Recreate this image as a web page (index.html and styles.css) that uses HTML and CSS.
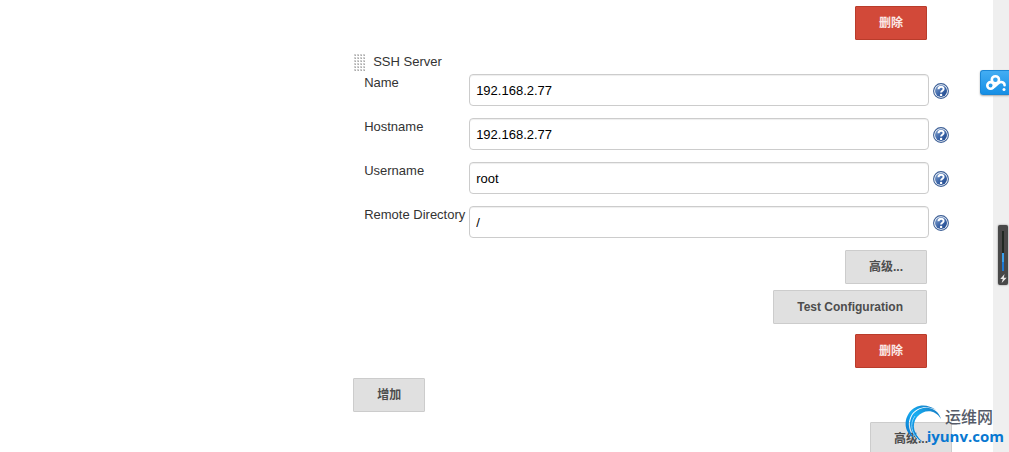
FILE: index.html
```
<!DOCTYPE html>
<html lang="zh-CN">
<head>
    <meta charset="UTF-8">
    <meta name="viewport" content="width=device-width, initial-scale=1.0">
    <title>SSH Server</title>
    <link rel="stylesheet" href="styles.css">
</head>
<body>
    <svg class="defs" width="0" height="0" aria-hidden="true">
        <defs>
            <linearGradient id="helpFill" x1="0" y1="0" x2="1" y2="1">
                <stop offset="0" stop-color="#8aa8d2"/>
                <stop offset="0.5" stop-color="#3f68aa"/>
                <stop offset="1" stop-color="#1c458a"/>
            </linearGradient>
            <symbol id="help" viewBox="0 0 16 16">
                <circle cx="8" cy="8" r="7.4" fill="#fff" stroke="#3c5f96" stroke-width="1.1"/>
                <circle cx="8" cy="8" r="6" fill="url(#helpFill)"/>
                <path d="M5.5 6.2C5.6 3 10.6 3 10.6 6C10.6 7.8 8.1 7.8 8.1 9.6" fill="none" stroke="#fff" stroke-width="2"/>
                <circle cx="8.1" cy="11.9" r="1.2" fill="#fff"/>
            </symbol>
        </defs>
    </svg>

    <main class="config">
        <div class="actions">
            <button type="button" class="btn btn-danger">删除</button>
        </div>

        <form class="server">
            <div class="server-title">
                <svg class="grip" width="11" height="17" aria-hidden="true">
                    <defs>
                        <pattern id="dots" width="3" height="3" patternUnits="userSpaceOnUse">
                            <rect width="2" height="2" fill="#d0d0d0"/>
                            <rect x="1" y="1" width="1" height="1" fill="#aaa"/>
                        </pattern>
                    </defs>
                    <rect width="11" height="17" fill="url(#dots)"/>
                </svg>
                <span>SSH Server</span>
            </div>
            <div class="field">
                <label for="name">Name</label>
                <input type="text" id="name" value="192.168.2.77">
                <a href="#" class="help" aria-label="Name"><svg width="16" height="16"><use href="#help"/></svg></a>
            </div>
            <div class="field">
                <label for="hostname">Hostname</label>
                <input type="text" id="hostname" value="192.168.2.77">
                <a href="#" class="help" aria-label="Hostname"><svg width="16" height="16"><use href="#help"/></svg></a>
            </div>
            <div class="field">
                <label for="username">Username</label>
                <input type="text" id="username" value="root">
                <a href="#" class="help" aria-label="Username"><svg width="16" height="16"><use href="#help"/></svg></a>
            </div>
            <div class="field">
                <label for="directory">Remote Directory</label>
                <input type="text" id="directory" value="/">
                <a href="#" class="help" aria-label="Remote Directory"><svg width="16" height="16"><use href="#help"/></svg></a>
            </div>
            <div class="actions actions-stack">
                <button type="button" class="btn">高级...</button>
                <button type="button" class="btn">Test Configuration</button>
            </div>
            <div class="actions">
                <button type="button" class="btn btn-danger">删除</button>
            </div>
        </form>

        <div class="add">
            <button type="button" class="btn">增加</button>
        </div>
        <div class="actions actions-outer">
            <button type="button" class="btn">高级...</button>
        </div>
    </main>
    <div class="gutter"></div>

    <!-- cloud drive tab -->
    <button type="button" class="cloud" aria-label="Cloud">
        <svg width="22" height="18" viewBox="0 0 22 18">
            <g fill="none" stroke="#fff" stroke-width="2.6" stroke-linecap="round">
                <circle cx="4.6" cy="11.4" r="3.3"/>
                <circle cx="9.4" cy="5.8" r="3.6"/>
                <path d="M7.4 13.2C9.6 12.4 11.4 9 13.8 8.2C16.6 7.4 18.6 9 18.6 11.2"/>
            </g>
            <circle cx="18" cy="15.4" r="1.5" fill="#fff"/>
        </svg>
    </button>

    <!-- battery / speed meter -->
    <div class="meter">
        <div class="meter-track"><div class="meter-fill"></div></div>
        <svg width="7" height="9" viewBox="0 0 7 9"><path d="M4.5 0L0.3 5H2.8L1.7 9L6.7 3.7H3.8Z" fill="#e8e8e8"/></svg>
    </div>

    <div class="watermark">
        <svg class="swirl" width="38" height="40" viewBox="0 0 38 40">
            <defs>
                <linearGradient id="swirlFill" x1="0" y1="1" x2="1" y2="0">
                    <stop offset="0" stop-color="#0a6fc8"/>
                    <stop offset="0.5" stop-color="#17aef2"/>
                    <stop offset="1" stop-color="#1674bd"/>
                </linearGradient>
            </defs>
            <path d="M31 6C22-1 10 0 4 9C-2 18 0 29 9 34C3 26 2 18 7 10C12 3 22 1 31 6Z" fill="url(#swirlFill)"/>
            <path d="M36 15C33 3 18 0 9 9C2 17 4 32 18 38C9 31 6 21 12 13C19 5 30 5 36 15Z" fill="url(#swirlFill)"/>
            <path d="M10 12C4 20 7 30 13 35" fill="none" stroke="#7fd6ff" stroke-width="1"/>
        </svg>
        <span class="mark-name">运维网</span>
        <span class="mark-site">iyunv.com</span>
    </div>
</body>
</html>
```
FILE: styles.css
```
* {
    box-sizing: border-box;
}
body {
    display: flex;
    height: 100vh;
    margin: 0;
    overflow: hidden;
    background-color: #fff;
    color: #333;
    font-family: "Liberation Sans", "Noto Sans CJK SC", sans-serif;
    font-size: 13px;
    line-height: 18px;
}
.defs {
    position: absolute;
}
.config {
    flex: 1;
    padding: 6px 41px 0 35%;
}
.gutter {
    width: 16px;
    background-color: #efefef;
}
.actions {
    display: flex;
    justify-content: flex-end;
    padding-right: 25px;
}
.actions-stack {
    flex-direction: column;
    align-items: flex-end;
    gap: 6px;
    margin-bottom: 10px;
}
.actions-outer {
    padding-right: 0;
}
.btn {
    height: 34px;
    padding: 0 23px;
    border: 1px solid #ccc;
    border-radius: 1px;
    background-color: #e0e0e0;
    color: #4d4d4d;
    font-family: inherit;
    font-size: 12px;
    font-weight: bold;
    line-height: 18px;
}
.btn-danger {
    border-color: #b93c2b;
    background-color: #d24939;
    color: #fbe9e7;
}

/* server block */
.server {
    margin-top: 12px;
}
.server-title {
    display: flex;
    align-items: center;
    gap: 8px;
    height: 20px;
    margin-bottom: 2px;
    padding-left: 1px;
}
.field {
    display: flex;
    margin-bottom: 12px;
    padding: 0 3px 0 11px;
}
.field label {
    width: 105px;
    white-space: nowrap;
}
.field input {
    flex: 1;
    min-width: 0;
    height: 32px;
    padding: 0 6px;
    border: 1px solid #ccc;
    border-radius: 4px;
    box-shadow: inset 0 1px 1px #eee;
    background-color: #fff;
    color: #000;
    font-family: inherit;
    font-size: 13px;
}
.help {
    height: 16px;
    margin: 9px 0 0 4px;
}
.help svg {
    display: block;
}
.add {
    margin: 10px 0;
}
.add .btn {
    display: block;
}

/* floating widgets */
.cloud {
    position: absolute;
    top: 70px;
    right: 0;
    display: flex;
    align-items: center;
    width: 29px;
    height: 25px;
    padding: 0 0 0 5px;
    border: 1px solid #1b87d6;
    border-right: 0;
    border-radius: 3px 0 0 3px;
    background: linear-gradient(#43adf3, #168fe5);
    box-shadow: 0 1px 2px #aaa;
}
.cloud svg {
    flex: none;
}
.meter {
    position: absolute;
    top: 225px;
    right: 1px;
    display: flex;
    flex-direction: column;
    align-items: center;
    gap: 3px;
    width: 10px;
    height: 60px;
    padding-top: 6px;
    border-radius: 2px;
    background-color: #484848;
    box-shadow: 0 0 2px #777;
}
.meter-track {
    display: flex;
    align-items: flex-end;
    width: 2px;
    height: 40px;
    background-color: #202822;
}
.meter-fill {
    width: 2px;
    height: 18px;
    background: linear-gradient(#36a0ee 50%, #1c78d2 50%);
}
.watermark {
    position: absolute;
    right: 5px;
    bottom: 7px;
    display: grid;
    justify-items: end;
    width: 99px;
}
.swirl {
    position: absolute;
    left: 0;
    top: 0;
}
.mark-name {
    padding: 5px 11px 0 0;
    color: #555b68;
    font-size: 16px;
    font-weight: 500;
    line-height: 18px;
}
.mark-site {
    position: relative;
    color: #0878d1;
    font-family: "Open Sans", "Liberation Sans", sans-serif;
    font-size: 15px;
    font-weight: bold;
    line-height: 18px;
}
```
